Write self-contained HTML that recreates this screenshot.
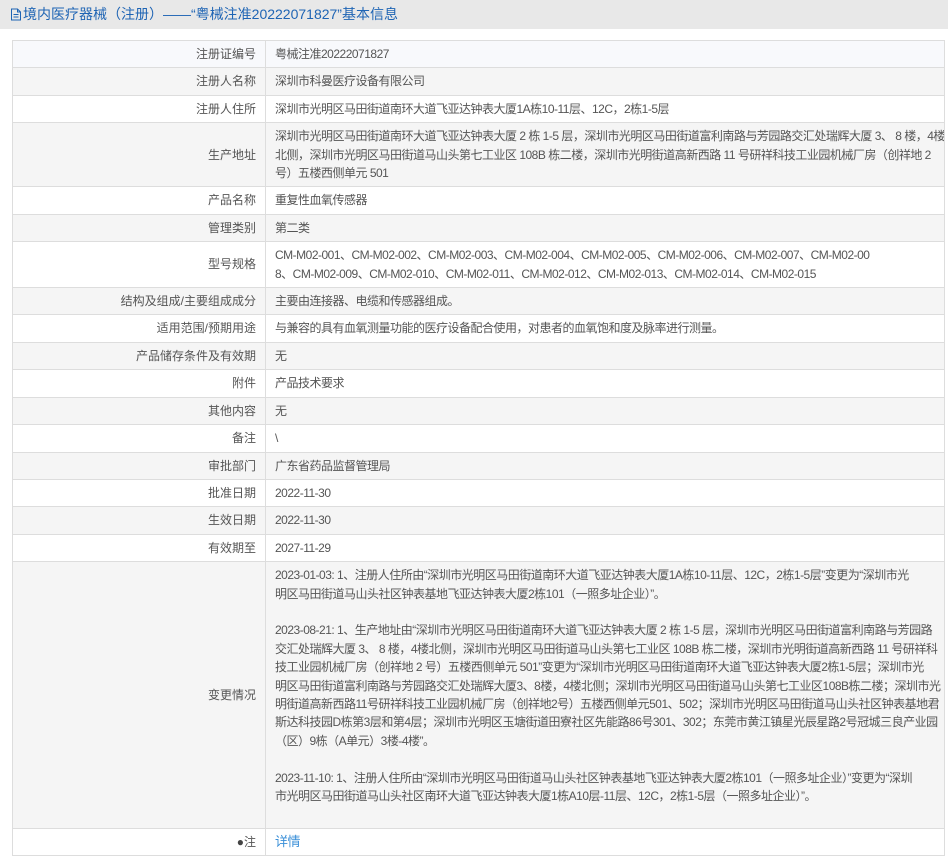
<!DOCTYPE html>
<html><head><meta charset="utf-8"><style>
*{margin:0;padding:0;box-sizing:border-box}
body{width:948px;height:860px;background:#fff;font-family:"Liberation Sans","Noto Sans CJK SC",sans-serif;font-size:12px;color:#555;overflow:hidden}
.hd{height:29px;background:#e8e8e8;color:#1e64b4;font-size:14px;line-height:29px;padding-left:10px;white-space:nowrap}
.hd svg{vertical-align:-2px;margin-right:1px}
table{position:absolute;left:12px;top:40px;width:933px;border-collapse:collapse;border:1px solid #ccc;table-layout:fixed}
td{border:1px solid #ddd;line-height:18.4px;padding:4px 9px;vertical-align:middle;white-space:nowrap;overflow:hidden}
td.l{text-align:right;color:#555}
td.v{letter-spacing:-0.5px}
tr:nth-child(even) td{background:#f5f5f5}
tr:nth-child(odd) td{background:#fff}
tr:first-child td{background:#f8f9fc}
a{color:#3a8fd8;text-decoration:none;font-size:13px}
</style></head><body>
<div class="hd"><svg width="12" height="13" viewBox="0 0 12 13"><path d="M1.5 1h6l3 3v8h-9z M7.5 1v3h3 M3.5 6.5h5 M3.5 9h5" fill="none" stroke="#1e64b4" stroke-width="1"/></svg>境内医疗器械（注册）——“粤械注准20222071827”基本信息</div>
<table>
<colgroup><col style="width:253px"><col></colgroup>
<tr><td class="l">注册证编号</td><td class="v">粤械注准20222071827</td></tr>
<tr><td class="l">注册人名称</td><td class="v">深圳市科曼医疗设备有限公司</td></tr>
<tr><td class="l">注册人住所</td><td class="v">深圳市光明区马田街道南环大道飞亚达钟表大厦1A栋10-11层、12C，2栋1-5层</td></tr>
<tr><td class="l">生产地址</td><td class="v">深圳市光明区马田街道南环大道飞亚达钟表大厦 2 栋 1-5 层，深圳市光明区马田街道富利南路与芳园路交汇处瑞辉大厦 3、 8 楼，4楼<br>北侧，深圳市光明区马田街道马山头第七工业区 108B 栋二楼，深圳市光明街道高新西路 11 号研祥科技工业园机械厂房（创祥地 2<br>号）五楼西侧单元 501</td></tr>
<tr><td class="l">产品名称</td><td class="v">重复性血氧传感器</td></tr>
<tr><td class="l">管理类别</td><td class="v">第二类</td></tr>
<tr><td class="l">型号规格</td><td class="v">CM-M02-001、CM-M02-002、CM-M02-003、CM-M02-004、CM-M02-005、CM-M02-006、CM-M02-007、CM-M02-00<br>8、CM-M02-009、CM-M02-010、CM-M02-011、CM-M02-012、CM-M02-013、CM-M02-014、CM-M02-015</td></tr>
<tr><td class="l">结构及组成/主要组成成分</td><td class="v">主要由连接器、电缆和传感器组成。</td></tr>
<tr><td class="l">适用范围/预期用途</td><td class="v">与兼容的具有血氧测量功能的医疗设备配合使用，对患者的血氧饱和度及脉率进行测量。</td></tr>
<tr><td class="l">产品储存条件及有效期</td><td class="v">无</td></tr>
<tr><td class="l">附件</td><td class="v">产品技术要求</td></tr>
<tr><td class="l">其他内容</td><td class="v">无</td></tr>
<tr><td class="l">备注</td><td class="v">\</td></tr>
<tr><td class="l">审批部门</td><td class="v">广东省药品监督管理局</td></tr>
<tr><td class="l">批准日期</td><td class="v">2022-11-30</td></tr>
<tr><td class="l">生效日期</td><td class="v">2022-11-30</td></tr>
<tr><td class="l">有效期至</td><td class="v">2027-11-29</td></tr>
<tr><td class="l">变更情况</td><td class="v">2023-01-03: 1、注册人住所由“深圳市光明区马田街道南环大道飞亚达钟表大厦1A栋10-11层、12C，2栋1-5层”变更为“深圳市光<br>明区马田街道马山头社区钟表基地飞亚达钟表大厦2栋101（一照多址企业）”。<br><br>2023-08-21: 1、生产地址由“深圳市光明区马田街道南环大道飞亚达钟表大厦 2 栋 1-5 层，深圳市光明区马田街道富利南路与芳园路<br>交汇处瑞辉大厦 3、 8 楼，4楼北侧，深圳市光明区马田街道马山头第七工业区 108B 栋二楼，深圳市光明街道高新西路 11 号研祥科<br>技工业园机械厂房（创祥地 2 号）五楼西侧单元 501”变更为“深圳市光明区马田街道南环大道飞亚达钟表大厦2栋1-5层；深圳市光<br>明区马田街道富利南路与芳园路交汇处瑞辉大厦3、8楼，4楼北侧；深圳市光明区马田街道马山头第七工业区108B栋二楼；深圳市光<br>明街道高新西路11号研祥科技工业园机械厂房（创祥地2号）五楼西侧单元501、502；深圳市光明区马田街道马山头社区钟表基地君<br>斯达科技园D栋第3层和第4层；深圳市光明区玉塘街道田寮社区先能路86号301、302；东莞市黄江镇星光辰星路2号冠城三良产业园<br>（区）9栋（A单元）3楼-4楼”。<br><br>2023-11-10: 1、注册人住所由“深圳市光明区马田街道马山头社区钟表基地飞亚达钟表大厦2栋101（一照多址企业）”变更为“深圳<br>市光明区马田街道马山头社区南环大道飞亚达钟表大厦1栋A10层-11层、12C，2栋1-5层（一照多址企业）”。<br>&nbsp;</td></tr>
<tr><td class="l"><span style="color:#444">&#9679;</span>注</td><td class="v"><a>详情</a></td></tr>
</table>
</body></html>
